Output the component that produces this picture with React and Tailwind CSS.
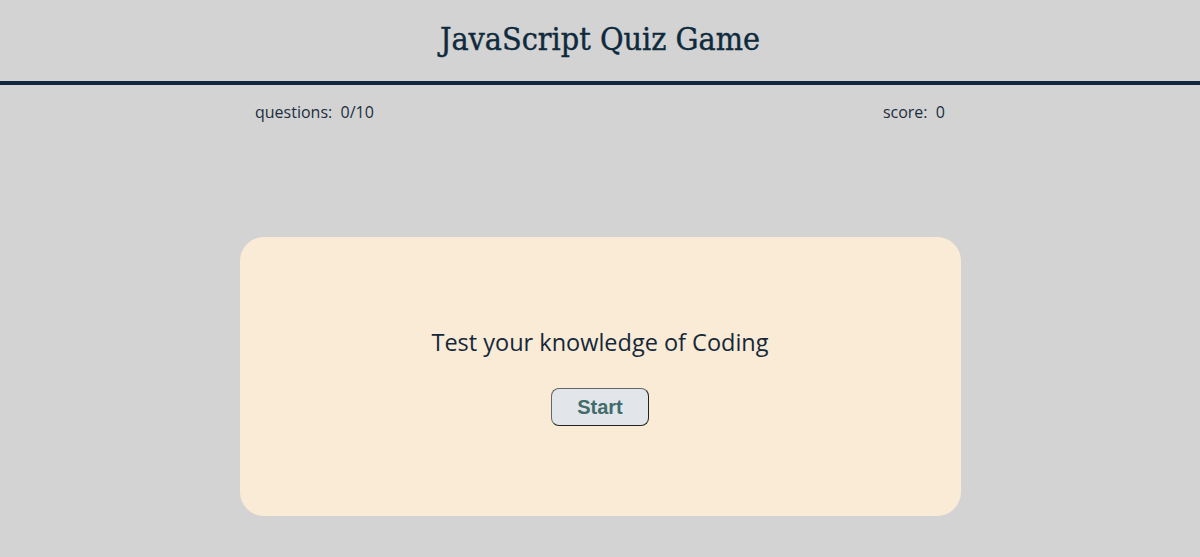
export default function App() {
  return (
    <div className="min-h-[557px] bg-[#d3d3d3] text-[#14283a]" style={{ fontFamily: '"Open Sans", sans-serif' }}>
      <header className="h-[85px] border-b-4 border-[#10263a] flex items-center justify-center">
        <h1 className="text-[32px] leading-none text-[#0f2a3c] pb-[3px] [-webkit-text-stroke:0.4px_#0f2a3c]" style={{ fontFamily: '"DejaVu Serif Condensed", "DejaVu Serif", serif' }}>
          JavaScript Quiz Game
        </h1>
      </header>
      <div className="w-[720px] mx-auto flex justify-between px-[15px] pt-[16px] text-[16px] leading-[22px] text-[#1c2e3e]">
        <span>questions:&nbsp; 0/10</span>
        <span>score:&nbsp; 0</span>
      </div>
      <div className="w-[721px] mx-auto mt-[114px] h-[279px] bg-[#faebd7] rounded-[24px] flex flex-col items-center pt-[90px]">
        <p className="text-[23.5px] text-[#14283a] leading-[30px]">Test your knowledge of Coding</p>
        <button
          className="mt-[31px] w-[98px] h-[38px] rounded-[8px] border-[1.5px] border-t-[#666] border-l-[#666] border-r-[#222] border-b-[#222] bg-[#e2e6ea] text-[20px] font-bold text-[#426c6c]"
          style={{ fontFamily: '"Liberation Sans", Arial, sans-serif' }}
        >
          Start
        </button>
      </div>
    </div>
  );
}
